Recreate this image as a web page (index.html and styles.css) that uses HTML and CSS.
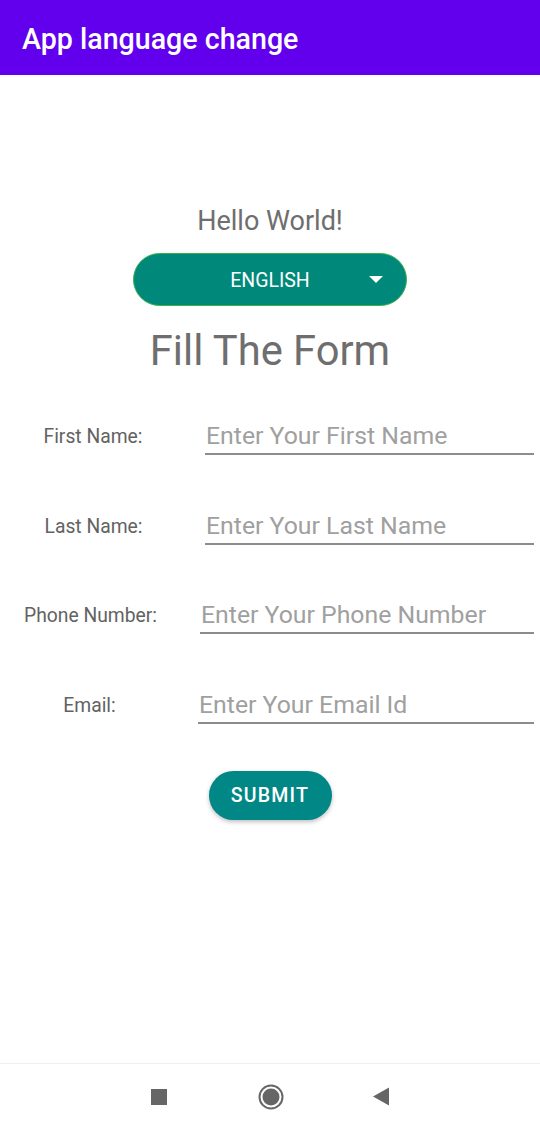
FILE: index.html
```html
<!DOCTYPE html>
<html>
<head>
<meta charset="utf-8">
<link rel="stylesheet" href="styles.css">
</head>
<body>
<div class="screen">
  <header class="appbar"><h1 class="appbar-title">App language change</h1></header>
  <main class="content">
    <p class="hello">Hello World!</p>
    <div class="spinner">
      <span class="spinner-text">ENGLISH</span>
      <svg class="spinner-arrow" width="14" height="8" viewBox="0 0 14 8"><path d="M0 0 L14 0 L7 7 Z" fill="#fff"/></svg>
    </div>
    <h2 class="form-title">Fill The Form</h2>
    <div class="rows">
      <div class="row row-first">
        <span class="label">First Name:</span>
        <div class="field">Enter Your First Name</div>
      </div>
      <div class="row row-last">
        <span class="label">Last Name:</span>
        <div class="field">Enter Your Last Name</div>
      </div>
      <div class="row row-phone">
        <span class="label">Phone Number:</span>
        <div class="field">Enter Your Phone Number</div>
      </div>
      <div class="row row-email">
        <span class="label">Email:</span>
        <div class="field">Enter Your Email Id</div>
      </div>
    </div>
    <button class="submit">SUBMIT</button>
  </main>
  <nav class="navbar">
    <svg width="16" height="16" viewBox="0 0 16 16" class="nav-icon nav-square"><rect x="0" y="0" width="16" height="16" fill="#666"/></svg>
    <svg width="26" height="26" viewBox="0 0 26 26" class="nav-icon nav-home"><circle cx="13" cy="13" r="11.5" fill="none" stroke="#666" stroke-width="2"/><circle cx="13" cy="13" r="8.5" fill="#666"/></svg>
    <svg width="17" height="19" viewBox="0 0 17 19" class="nav-icon nav-back"><path d="M0 9.5 L16 0.5 L16 18.5 Z" fill="#666"/></svg>
  </nav>
</div>
</body>
</html>
```
FILE: styles.css
```css
* { box-sizing: border-box; }
html, body { margin: 0; padding: 0; background: #fff; }
body { font-family: Roboto, "Noto Sans", sans-serif; }
.screen { width: 540px; height: 1129px; display: flex; flex-direction: column; }
.appbar { height: 75px; background: #6200ee; display: flex; align-items: center; padding-left: 22px; flex-shrink: 0; }
.appbar-title { margin: 0; color: #fff; font-size: 28.6px; font-weight: 500; line-height: 32px; position: relative; top: 1px; }
.content { flex: 1; display: flex; flex-direction: column; align-items: center; padding-top: 131px; }
.hello { margin: 0; font-size: 27px; line-height: 30px; color: #6e6e6e; }
.spinner { margin-top: 17px; width: 274px; height: 53px; border-radius: 27px; background: #00897b; border: 1px solid #3db04a; display: flex; align-items: center; justify-content: center; position: relative; padding-top: 1px; }
.spinner-text { color: #fff; font-size: 19.5px; }
.spinner-arrow { position: absolute; left: 235px; top: 22px; }
.form-title { margin: 23px 0 0; font-size: 41.7px; line-height: 44px; font-weight: 400; color: #6e6e6e; }
.rows { margin-top: 42px; width: 100%; display: flex; flex-direction: column; gap: 47.5px; }
.row { display: flex; align-items: flex-start; padding-right: 6px; height: 42px; }
.label { font-size: 19.3px; height: 42px; padding-top: 2px; line-height: 40px; color: #626262; text-align: center; flex-shrink: 0; }
.field { flex: 1; height: 40px; border-bottom: 2px solid #8c8c8c; font-size: 24.8px; line-height: 35px; padding-top: 3px; color: #a0a0a0; padding-left: 1px; white-space: nowrap; overflow: hidden; }
.row-first .label { margin-left: 43px; width: 100px; margin-right: 62px; }
.row-last .label { margin-left: 44px; width: 99px; margin-right: 62px; }
.row-phone .label { margin-left: 23px; width: 135px; margin-right: 42px; }
.row-email .label { margin-left: 63px; width: 53px; margin-right: 82px; }
.submit { margin-top: 45.5px; width: 123px; height: 49px; border: none; border-radius: 25px; background: #018786; color: #fff; font-family: Roboto, sans-serif; font-size: 19.5px; font-weight: 500; letter-spacing: 1.2px; box-shadow: 0 2px 4px rgba(0,0,0,0.25); }
.navbar { height: 66px; flex-shrink: 0; border-top: 1px solid #efefef; display: flex; align-items: center; justify-content: center; }
.nav-square { margin-right: 91px; }
.nav-home { margin-right: 89px; }
```
